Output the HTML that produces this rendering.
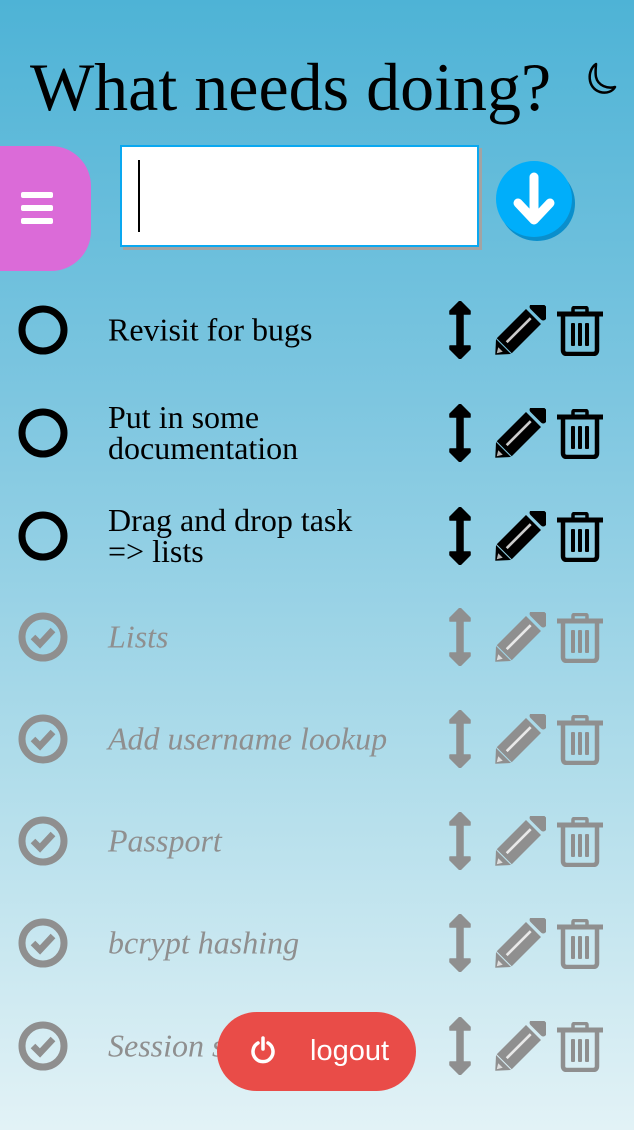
<!DOCTYPE html>
<html><head><meta charset="utf-8"><style>
body{margin:0;width:634px;height:1130px;overflow:hidden;background:linear-gradient(#4eb3d6,#7dc6e0 35%,#b3deeb 70%,#e2f2f6);font-family:"Liberation Serif",serif;position:relative}
.a{position:absolute}
h1{position:absolute;left:30px;top:47px;margin:0;font-weight:normal;font-size:68px;line-height:80px;color:#000;white-space:nowrap}
.row{position:absolute;left:0;width:634px;height:70px}
.row .t{position:absolute;left:108px;font-size:32px;line-height:31px;top:50%;transform:translateY(-50%);white-space:nowrap}
.row svg{position:absolute}
.done{color:#8f8f8f}
.done .t{font-style:italic}
</style></head><body>
<h1>What needs doing?</h1>
<svg class="a" style="left:584px;top:61px" width="34" height="36" viewBox="0 0 34 36"><path d="M12 3 C3 9 3 27 16 31 C23 33 29 30 31 26 C24 28 14 25 12 16 C11 11 12 6 12 3 Z" fill="none" stroke="#000" stroke-width="2.5" stroke-linejoin="round"/></svg>
<div class="a" style="left:0;top:146px;width:91px;height:125px;background:#db6bd8;border-radius:0 40px 40px 0"></div>
<div class="a" style="left:21px;top:192px;width:32px;height:6px;background:#fff;border-radius:2px"></div>
<div class="a" style="left:21px;top:205px;width:32px;height:6px;background:#fff;border-radius:2px"></div>
<div class="a" style="left:21px;top:218px;width:32px;height:6px;background:#fff;border-radius:2px"></div>
<div class="a" style="left:123px;top:148px;width:359px;height:102px;background:#a3a3a3"></div>
<div class="a" style="left:120px;top:145px;width:355px;height:98px;background:#fff;border:2px solid #0aa8f0"></div>
<div class="a" style="left:138px;top:160px;width:2px;height:72px;background:#000"></div>
<div class="a" style="left:499px;top:166px;width:76px;height:75px;border-radius:50%;background:#0a8fcc"></div>
<div class="a" style="left:496px;top:161px;width:76px;height:76px;border-radius:50%;background:#00aefa"></div>
<svg class="a" style="left:496px;top:161px" width="76" height="76" viewBox="0 0 76 76"><path d="M38 16 V56 M22 42 L38 59 L54 42" stroke="#fff" stroke-width="9" stroke-linecap="round" stroke-linejoin="round" fill="none"/></svg>

<svg width="0" height="0" style="position:absolute"><defs>
<symbol id="arr" viewBox="0 0 24 58"><path d="M12 0 L22 10 L22 13 L15 13 L15 45 L22 45 L22 48 L12 58 L2 48 L2 45 L9 45 L9 13 L2 13 L2 10 Z" fill="currentColor" stroke="currentColor" stroke-width="1.5" stroke-linejoin="round"/></symbol>
<symbol id="pen" viewBox="0 0 52 50"><g transform="translate(26,25) rotate(-45) scale(1.06)"><path d="M-33 0 L-22 -10 L-22 10 Z" fill="currentColor"/><rect x="-21" y="-10" width="39" height="20" fill="currentColor"/><rect x="-17" y="-2" width="32" height="2.5" fill="#fff" opacity=".8"/><rect x="21" y="-10" width="12" height="20" rx="3" fill="currentColor"/><path d="M-31 0 L-26 -3 L-26 3 Z" fill="#fff" opacity=".7"/></g></symbol>
<symbol id="trash" viewBox="0 0 46 50"><path d="M0 8 H46" stroke="currentColor" stroke-width="5"/><path d="M16 7 V3 Q16 1.5 18 1.5 H28 Q30 1.5 30 3 V7" stroke="currentColor" stroke-width="3.5" fill="none"/><path d="M6 10 V44 Q6 48 10 48 H36 Q40 48 40 44 V10" stroke="currentColor" stroke-width="4.5" fill="none"/><rect x="14" y="17" width="4" height="23" rx="1" fill="currentColor"/><rect x="21" y="17" width="4" height="23" rx="1" fill="currentColor"/><rect x="28" y="17" width="4" height="23" rx="1" fill="currentColor"/></symbol>
<symbol id="circ" viewBox="0 0 50 50"><circle cx="25" cy="25" r="21" stroke="currentColor" stroke-width="7" fill="none"/></symbol>
<symbol id="chk" viewBox="0 0 50 50"><circle cx="25" cy="25" r="21" stroke="currentColor" stroke-width="7" fill="none"/><path d="M15 25 L22 32 L35 18" stroke="currentColor" stroke-width="6.5" fill="none" stroke-linejoin="miter"/></symbol>
</defs></svg>

<div class="row" style="top:295px"><svg style="left:18px;top:10px" width="50" height="50"><use href="#circ"/></svg><div class="t">Revisit for bugs</div><svg style="left:448px;top:6px" width="24" height="58"><use href="#arr"/></svg><svg style="left:494px;top:10px" width="52" height="50"><use href="#pen"/></svg><svg style="left:557px;top:11px" width="46" height="50"><use href="#trash"/></svg></div>
<div class="row" style="top:398px"><svg style="left:18px;top:10px" width="50" height="50"><use href="#circ"/></svg><div class="t">Put in some<br>documentation</div><svg style="left:448px;top:6px" width="24" height="58"><use href="#arr"/></svg><svg style="left:494px;top:10px" width="52" height="50"><use href="#pen"/></svg><svg style="left:557px;top:11px" width="46" height="50"><use href="#trash"/></svg></div>
<div class="row" style="top:501px"><svg style="left:18px;top:10px" width="50" height="50"><use href="#circ"/></svg><div class="t">Drag and drop task<br>=&gt; lists</div><svg style="left:448px;top:6px" width="24" height="58"><use href="#arr"/></svg><svg style="left:494px;top:10px" width="52" height="50"><use href="#pen"/></svg><svg style="left:557px;top:11px" width="46" height="50"><use href="#trash"/></svg></div>
<div class="row done" style="top:602px"><svg style="left:18px;top:10px" width="50" height="50"><use href="#chk"/></svg><div class="t">Lists</div><svg style="left:448px;top:6px" width="24" height="58"><use href="#arr"/></svg><svg style="left:494px;top:10px" width="52" height="50"><use href="#pen"/></svg><svg style="left:557px;top:11px" width="46" height="50"><use href="#trash"/></svg></div>
<div class="row done" style="top:704px"><svg style="left:18px;top:10px" width="50" height="50"><use href="#chk"/></svg><div class="t">Add username lookup</div><svg style="left:448px;top:6px" width="24" height="58"><use href="#arr"/></svg><svg style="left:494px;top:10px" width="52" height="50"><use href="#pen"/></svg><svg style="left:557px;top:11px" width="46" height="50"><use href="#trash"/></svg></div>
<div class="row done" style="top:806px"><svg style="left:18px;top:10px" width="50" height="50"><use href="#chk"/></svg><div class="t">Passport</div><svg style="left:448px;top:6px" width="24" height="58"><use href="#arr"/></svg><svg style="left:494px;top:10px" width="52" height="50"><use href="#pen"/></svg><svg style="left:557px;top:11px" width="46" height="50"><use href="#trash"/></svg></div>
<div class="row done" style="top:908px"><svg style="left:18px;top:10px" width="50" height="50"><use href="#chk"/></svg><div class="t">bcrypt hashing</div><svg style="left:448px;top:6px" width="24" height="58"><use href="#arr"/></svg><svg style="left:494px;top:10px" width="52" height="50"><use href="#pen"/></svg><svg style="left:557px;top:11px" width="46" height="50"><use href="#trash"/></svg></div>
<div class="row done" style="top:1011px"><svg style="left:18px;top:10px" width="50" height="50"><use href="#chk"/></svg><div class="t">Session storage</div><svg style="left:448px;top:6px" width="24" height="58"><use href="#arr"/></svg><svg style="left:494px;top:10px" width="52" height="50"><use href="#pen"/></svg><svg style="left:557px;top:11px" width="46" height="50"><use href="#trash"/></svg></div>

<div class="a" style="left:217px;top:1012px;width:199px;height:79px;background:#e94c48;border-radius:40px"></div>
<svg class="a" style="left:248px;top:1034px" width="30" height="32" viewBox="0 0 30 32"><path d="M10 9 A10 10 0 1 0 20 9" stroke="#fff" stroke-width="3.5" fill="none" stroke-linecap="round"/><path d="M15 4 V15" stroke="#fff" stroke-width="3.5" stroke-linecap="round"/></svg>
<div class="a" style="left:310px;top:1033px;color:#fff;font-family:'Liberation Sans',sans-serif;font-size:29px;line-height:36px">logout</div>
</body></html>
